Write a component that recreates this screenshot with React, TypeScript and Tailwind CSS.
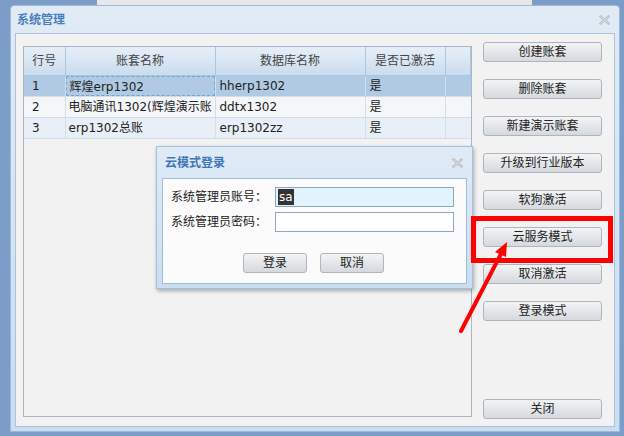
import React from 'react';

const font = "font-['DejaVu_Sans','Noto_Sans_CJK_SC',sans-serif]";

const rows = [
  { no: '1', name: '辉煌erp1302', db: 'hherp1302', active: '是' },
  { no: '2', name: '电脑通讯1302(辉煌演示账', db: 'ddtx1302', active: '是' },
  { no: '3', name: 'erp1302总账', db: 'erp1302zz', active: '是' },
];

const sideButtons = ['创建账套', '删除账套', '新建演示账套', '升级到行业版本', '软狗激活', '云服务模式', '取消激活', '登录模式'];

function CloseX() {
  return (
    <svg width="11" height="10" viewBox="0 0 11 10">
      <path d="M1.5 1.5 L9.5 8.5 M9.5 1.5 L1.5 8.5" stroke="#b9bcc0" strokeWidth="2.4" strokeLinecap="square" />
      <path d="M1.5 1.5 L9.5 8.5 M9.5 1.5 L1.5 8.5" stroke="#eef1f4" strokeWidth="0.7" />
    </svg>
  );
}

function WinButton({ label, className = '' }: { label: string; className?: string }) {
  return (
    <button
      className={`flex h-[20px] items-center justify-center rounded-[3px] border border-[#adb5bf] bg-gradient-to-b from-[#f3f4f5] to-[#d5d9de] text-[12px] leading-none text-[#222] ${className}`}
    >
      {label}
    </button>
  );
}

export default function App() {
  return (
    <div className={`relative flex h-[436px] w-[624px] flex-col overflow-hidden bg-[#7d9dc9] ${font}`}>
      <div className="flex h-[5px] shrink-0">
        <div className="w-[97px]" />
        <div className="w-[435px] bg-[#e6e8eb]" />
      </div>

      {/* main window */}
      <div className="ml-[10px] mr-[4px] flex h-[427px] flex-col rounded-t-[4px] border border-[#9fb8d6] bg-gradient-to-b from-[#e1ebf6] to-[#cbddf0]">
        <div className="flex h-[27px] shrink-0 items-center justify-between pl-[6px] pr-[9px]">
          <span className="text-[12px] font-bold text-[#4a7dba]">系统管理</span>
          <CloseX />
        </div>
        <div className="mx-[4px] mb-[4px] flex flex-1 border border-[#a9c2dd] bg-[#f2f2f2]">
          {/* table panel */}
          <div className="ml-[7px] mt-[12px] mb-[9px] w-[449px] border border-[#a8b7c6] bg-[#f2f2f2]">
            <table className="w-full table-fixed border-collapse text-[12px] text-[#222]">
              <colgroup>
                <col className="w-[41px]" />
                <col className="w-[150px]" />
                <col className="w-[150px]" />
                <col className="w-[80px]" />
                <col />
              </colgroup>
              <thead>
                <tr className="h-[28px] bg-gradient-to-b from-[#e7eff8] to-[#cadcee] text-[#444]">
                  {['行号', '账套名称', '数据库名称', '是否已激活', ''].map((h, i) => (
                    <th key={i} className="border-r border-b border-[#a9c8e0] text-center font-normal">
                      {h}
                    </th>
                  ))}
                </tr>
              </thead>
              <tbody>
                {rows.map((r, i) => (
                  <tr
                    key={r.no}
                    className={`h-[21px] ${i === 0 ? 'bg-[#b0cae3]' : i === 1 ? 'bg-[#f5f6f8]' : 'bg-[#e9eff6]'}`}
                  >
                    <td className="border-r border-b border-[#d0dfee] pl-[8px]">{r.no}</td>
                    <td className="border-r border-b border-[#d0dfee] p-0">
                      <div
                        className={`h-[20px] overflow-hidden whitespace-nowrap pl-[3px] leading-[20px] ${
                          i === 0 ? 'border border-dashed border-[#6ea6c8] leading-[18px]' : ''
                        }`}
                      >
                        {r.name}
                      </div>
                    </td>
                    <td className="overflow-hidden whitespace-nowrap border-r border-b border-[#d0dfee] pl-[4px]">{r.db}</td>
                    <td className="border-r border-b border-[#d0dfee] pl-[4px]">{r.active}</td>
                    <td className="border-b border-[#d0dfee]" />
                  </tr>
                ))}
              </tbody>
            </table>
          </div>

          {/* side buttons */}
          <div className="ml-[11px] mt-[8px] mb-[7px] flex w-[119px] flex-col">
            <div className="flex flex-col gap-[17px]">
              {sideButtons.map((b) => (
                <WinButton key={b} label={b} />
              ))}
            </div>
            <div className="flex-1" />
            <WinButton label="关闭" />
          </div>
        </div>
      </div>

      {/* cloud login dialog */}
      <div className="absolute left-[156px] top-[146px] flex h-[143px] w-[317px] flex-col border border-[#a3bfdc] bg-gradient-to-b from-[#e0ebf7] to-[#cadef2] shadow-[1px_2px_4px_rgba(0,0,0,0.3)]">
        <div className="flex h-[31px] shrink-0 items-center justify-between pl-[8px] pr-[9px]">
          <span className="text-[12px] font-bold text-[#3f76b6]">云模式登录</span>
          <CloseX />
        </div>
        <div className="mx-[5px] mb-[4px] flex flex-1 flex-col border border-[#9fbcd9] bg-[#fbfbfb] pl-[8px] pt-[8px] text-[12px] text-[#222]">
          <div className="flex h-[20px] items-center">
            <span className="w-[104px]">系统管理员账号：</span>
            <div className="flex h-[20px] w-[179px] items-center border border-[#8ea7bf] bg-[#e1f4fd] pl-[2px]">
              <span className="bg-[#333] px-[1px] leading-[16px] text-white">sa</span>
            </div>
          </div>
          <div className="mt-[5px] flex h-[20px] items-center">
            <span className="w-[104px]">系统管理员密码：</span>
            <div className="h-[20px] w-[179px] border border-[#8ea7bf] bg-white" />
          </div>
          <div className="mt-[21px] flex justify-center gap-[13px] pr-[10px]">
            <WinButton label="登录" className="w-[64px]" />
            <WinButton label="取消" className="w-[64px]" />
          </div>
        </div>
      </div>

      {/* annotation: red box + arrow */}
      <div className="absolute left-[471px] top-[216px] h-[47px] w-[142px] border-[5px] border-[#ff0000]" />
      <svg className="pointer-events-none absolute left-0 top-0" width="624" height="436">
        <line x1="461" y1="331" x2="502" y2="252" stroke="#ff0000" strokeWidth="4" strokeLinecap="round" />
        <polygon points="507,242 506,257 495,252" fill="#ff0000" />
      </svg>
    </div>
  );
}
